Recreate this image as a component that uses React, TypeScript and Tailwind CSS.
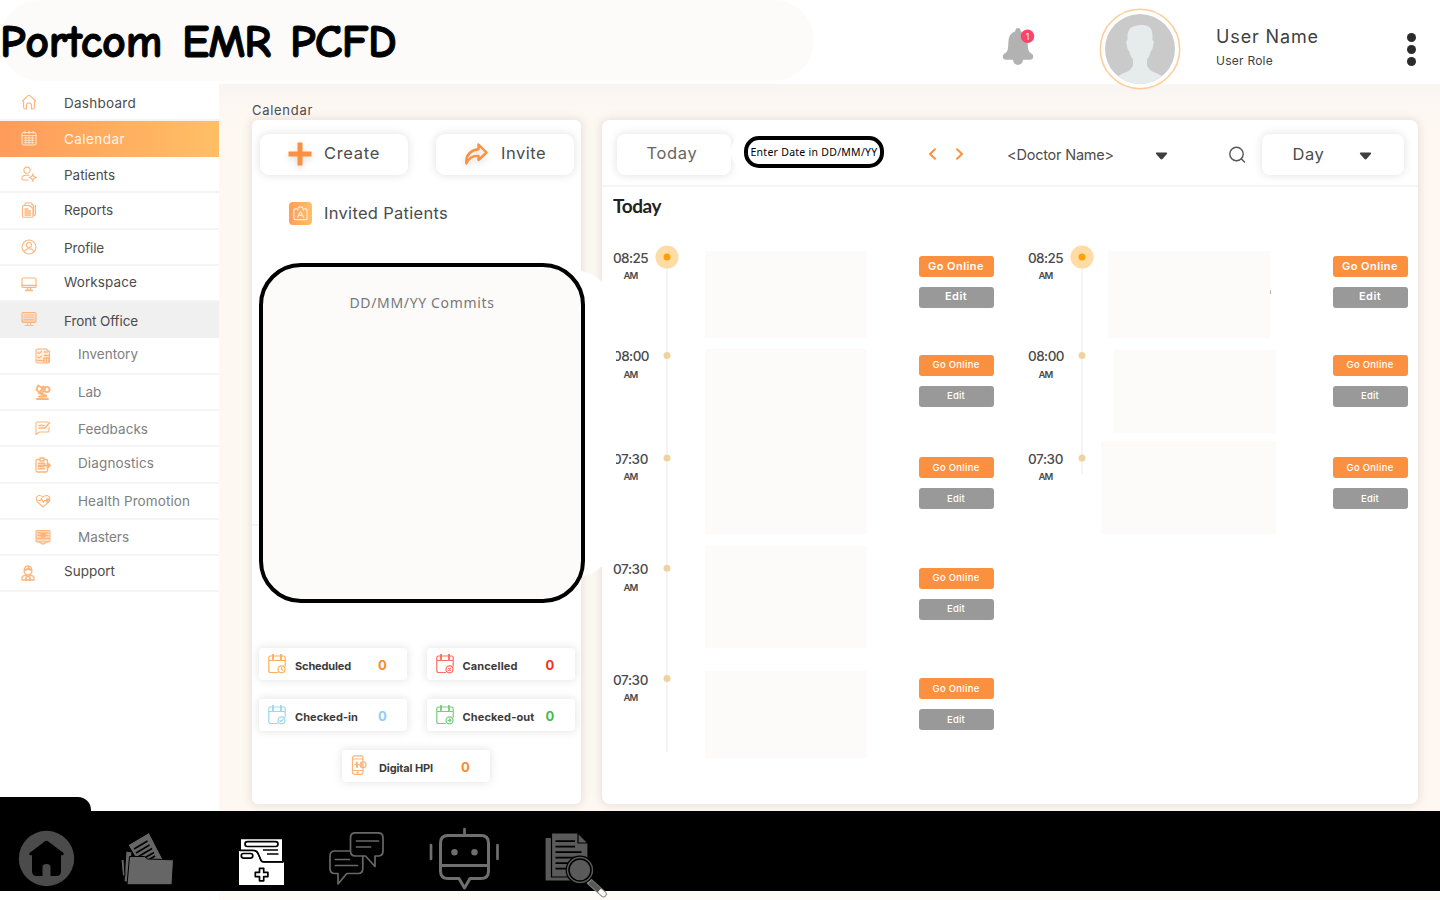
import React, { useLayoutEffect, useRef, useState } from "react";

const sans = "font-['Inter',sans-serif]";
const noto = "font-['Noto_Sans',sans-serif]";

/** Single-line label whose tracking is adjusted so that it spans `w` pixels. */
function Fit({ w, children, className = "" }: { w: number; children: string; className?: string }) {
  const ref = useRef<HTMLSpanElement>(null);
  const [ls, setLs] = useState(0);
  useLayoutEffect(() => {
    if (!ref.current) return;
    const natural = ref.current.getBoundingClientRect().width;
    setLs((w - natural) / Math.max(1, children.length));
  }, [w, children]);
  return (
    <span ref={ref} className={`inline-block shrink-0 whitespace-pre ${className}`} style={{ letterSpacing: ls }}>
      {children}
    </span>
  );
}

function Ico({ children, className = "size-4" }: { children: React.ReactNode; className?: string }) {
  return (
    <svg viewBox="0 0 16 16" fill="none" stroke="currentColor" strokeWidth="1.1" strokeLinecap="round" strokeLinejoin="round" className={`shrink-0 ${className}`}>
      {children}
    </svg>
  );
}

const icons: Record<string, React.ReactNode> = {
  home: <path d="M1.5 7 6.8 1.8Q8 .8 9.2 1.8L14.5 7 13.4 7.8V13.5Q13.4 15 11.8 15H10.6V11.5Q10.6 9 8 9T5.4 11.5V15H4.2Q2.6 15 2.6 13.5V7.8Z" />,
  calendar: (
    <>
      <rect x="1" y="2.5" width="14" height="12.5" rx="1.8" />
      <path d="M4 1v2.5M8 1v2.5M12 1v2.5M1 5.5h14M3 8h10M3 10.3h10M3 12.6h10M4.7 6.5v7.5M8 6.5v7.5M11.3 6.5v7.5" strokeWidth=".9" />
    </>
  ),
  patients: (
    <>
      <circle cx="6" cy="4.2" r="3.1" />
      <path d="M7 14H2.2Q.8 14 .8 12.5 1.2 9.3 4.5 9.3H8M11.8 8 12.8 10.6 15.4 11.6 12.8 12.6 11.8 15.2 10.8 12.6 8.2 11.6 10.8 10.6Z" />
    </>
  ),
  reports: (
    <>
      <path d="M4 3.5V2Q4 1 5 1H10L12.5 3.5M14.5 3V12Q14.5 13 13.5 13.4M1.5 4.5Q1.5 3.5 2.5 3.5H8.5L12 6.5V14.2Q12 15.2 11 15.2H2.5Q1.5 15.2 1.5 14.2Z" />
      <path d="M4 7h3M4 9h5.5M4 11h5.5M4 13h5.5M12.5 4v9" strokeWidth="1.4" />
    </>
  ),
  profile: (
    <>
      <circle cx="8" cy="8" r="7" />
      <circle cx="8" cy="6" r="2.5" />
      <path d="M3.5 13Q3.8 9.7 8 9.7T12.5 13" />
    </>
  ),
  workspace: (
    <>
      <rect x="1" y="2" width="14" height="9.5" rx="1" />
      <path d="M1 9.5h14M6.5 12v2M9.5 12v2M4.5 14.5h7" strokeWidth="1.4" />
    </>
  ),
  front: (
    <>
      <rect x="1" y="1.5" width="14" height="10" rx="1.2" fill="currentColor" fillOpacity=".25" />
      <path d="M3 4h10M3 6.2h10M3 8.4h10M1 10h14M6.5 12v2M9.5 12v2M4 14.5h8" strokeWidth=".9" />
    </>
  ),
  inventory: (
    <>
      <path d="M1 2.5Q1 1 2.5 1H11L14.5 3.5V13.5Q14.5 15 13 15H2.5Q1 15 1 13.5ZM2.8 4.5 4 5.7 6.5 3.5M2.8 9 4 10.2 6.5 8" fill="currentColor" fillOpacity=".2" />
      <path d="M2.5 12.5h5M9.5 4h3M9 14V10h5v4M9.5 7.5h4M11.5 10v4" strokeWidth="1.6" />
    </>
  ),
  lab: (
    <>
      <path d="M3 1.5 7.5 4 5 8.5 1.5 6ZM8 2.5 10 4 7.5 8.5M4 9 11 11.5M2 15h11M4 12.5h7" strokeWidth="2" />
      <circle cx="12" cy="5.5" r="2.6" strokeWidth="1.9" />
    </>
  ),
  feedback: (
    <>
      <path d="M12.5 2H2Q1 2 1 3V14.5L4.5 12H13Q14 12 14 11V7" />
      <path d="M4 5.5h5M4 8h6M9.8 8.2 14.5 2.5" strokeWidth="1.5" />
    </>
  ),
  diagnostics: (
    <>
      <path d="M5 2.5H2.5Q1 2.5 1 4V13.5Q1 15 2.5 15H11Q12.5 15 12.5 13.5V11M5 1h4v3H5ZM9 2.5h2Q12.5 2.5 12.5 4V6" strokeWidth="1.3" />
      <path d="M3.5 6.5h6M3.5 9h5M3.5 11.5h6M9.5 8.5h5.5M12.5 6.3 15 8.5 12.5 10.7" strokeWidth="1.9" />
    </>
  ),
  health: (
    <>
      <path d="M8 14 2.3 8.6Q.3 6 1.8 3.8 4.5 1.2 8 4 11.5 1.2 14.2 3.8 15.7 6 13.7 8.6Z" />
      <path d="M3 7.5h2.5L6.5 5.5 8.3 9.5 9.5 7.5h1" />
      <circle cx="12.8" cy="7.5" r="1.8" fill="currentColor" />
    </>
  ),
  masters: (
    <>
      <rect x="1" y="1.5" width="14" height="11.5" rx="1" fill="currentColor" fillOpacity=".45" />
      <path d="M3 4h3M10 4h3M3 6.5h2M11 6.5h2M4 13 8 15.3 12 13M2 9.5h12" strokeWidth="1.3" />
      <circle cx="8" cy="6" r="2.3" fill="currentColor" />
    </>
  ),
  support: (
    <>
      <path d="M4.2 6.5Q4 1 8 1T11.8 6.5Q11.8 9 8 10.2 4.2 9 4.2 6.5ZM2 15V12.5Q2.5 10.7 5.5 10.4L8 12 10.5 10.4Q13.5 10.7 14 12.5V15Z" strokeWidth="1.3" />
      <path d="M4.7 5Q8 4.5 8.5 3 9.5 5 11.3 5M6 13v2M10 13v2" strokeWidth="1.9" />
    </>
  ),
};

type Nav = { icon: string; label: string; w: number; sub?: boolean; active?: boolean; open?: boolean; text: string; ic: string };
const nav: Nav[] = [
  { icon: "home", label: "Dashboard", w: 72, text: "pt-[3px]", ic: "pt-px" },
  { icon: "calendar", label: "Calendar", w: 61, active: true, text: "pt-[3px]", ic: "pt-px" },
  { icon: "patients", label: "Patients", w: 51, text: "pt-[2px]", ic: "pt-0" },
  { icon: "reports", label: "Reports", w: 49, text: "pt-0", ic: "pt-0" },
  { icon: "profile", label: "Profile", w: 40, text: "pt-[2px]", ic: "pt-px" },
  { icon: "workspace", label: "Workspace", w: 73, text: "pb-[3px]", ic: "pt-[1px]" },
  { icon: "front", label: "Front Office", w: 74, open: true, text: "pt-[3px]", ic: "pt-0" },
  { icon: "inventory", label: "Inventory", w: 60, sub: true, text: "pb-[3px]", ic: "pt-0" },
  { icon: "lab", label: "Lab", w: 23, sub: true, text: "pt-0", ic: "pt-0" },
  { icon: "feedback", label: "Feedbacks", w: 70, sub: true, text: "pt-px", ic: "pb-[1px]" },
  { icon: "diagnostics", label: "Diagnostics", w: 76, sub: true, text: "pb-[3px]", ic: "pt-px" },
  { icon: "health", label: "Health Promotion", w: 112, sub: true, text: "pt-px", ic: "pt-0" },
  { icon: "masters", label: "Masters", w: 51, sub: true, text: "pt-0", ic: "pt-0" },
  { icon: "support", label: "Support", w: 51, text: "pb-[5px]", ic: "pt-0" },
];

function Sidebar() {
  return (
    <nav className="w-[219px] shrink-0 bg-white pt-[0.500px]">
      {nav.map((n) => (
        <div
          key={n.label}
          className={`flex h-[36.290px] items-center border-b-2 ${
            n.active ? "border-transparent bg-linear-to-r from-[#ff9b5b] to-[#ffbf65] bg-origin-border" : n.open ? "border-[#f0f0f0] bg-[#f0f0f0]" : "border-[#f4f4f4]"
          } ${n.sub ? "pl-[35px]" : n.icon === "support" ? "pl-[20px]" : "pl-[21px]"}`}
        >
          <div className={`flex w-4 ${n.ic} ${n.active ? "text-[#ffe5cb]" : "text-[#ffb47a]"}`}>
            <Ico>{icons[n.icon]}</Ico>
          </div>
          <div className={`${n.icon === "support" ? "ml-[28px]" : "ml-[27px]"} ${n.sub ? "text-[#808080]" : n.active ? "text-[#fff5ea]" : "text-[#4c4c4c]"} ${n.text} flex text-[13.500px] leading-[16px]`}>
            <Fit w={n.w}>{n.label}</Fit>
          </div>
        </div>
      ))}
    </nav>
  );
}

function Header() {
  return (
    <header className="relative z-10 flex h-[84px] shrink-0 items-start bg-white">
      <div className="flex h-[81px] w-[814px] shrink-0 items-center gap-[20px] rounded-[40px] bg-[#fcfbf9] pt-[5px] font-['Comic_Sans_MS','Comic_Neue','Lato',sans-serif] text-[46px] leading-none font-black text-black [-webkit-text-stroke:1px_black]">
        <Fit w={162}>Portcom</Fit>
        <Fit w={88}>EMR</Fit>
        <Fit w={106}>PCFD</Fit>
      </div>
      <svg viewBox="1002 27 34 40" className="mt-[27px] ml-[188px] h-10 w-[34px] shrink-0">
        <path d="M1018 28q2.600 0 2.700 3.200 6.500 2 6.900 10.300l.4 7.500q.3 2.500 4 5 1.600 1.200 1.200 3.200-.5 2.500-3 2.500h-7q-1.200 5.200-5.200 5.200t-5.200-5.200h-7q-2.500 0-3-2.500-.4-2 1.200-3.200 3.700-2.500 4-5l.4-7.500q.4-8.300 6.900-10.300.1-3.200 2.700-3.200Z" fill="#b2b2b2" />
        <circle cx="1027.500" cy="36.300" r="6.700" fill="#ff426b" />
        <text x="1027.500" y="39.500" textAnchor="middle" fontSize="8.500" fill="#fff" fontFamily="Inter, sans-serif">1</text>
      </svg>
      <svg viewBox="1099 8 82 82" className="mt-[8px] ml-[63px] size-[82px] shrink-0">
        <defs>
          <clipPath id="face"><circle cx="1140" cy="49" r="35" /></clipPath>
        </defs>
        <circle cx="1140" cy="49" r="39.700" fill="#fff" stroke="#fdcd98" strokeWidth="1.500" />
        <circle cx="1140" cy="49" r="35" fill="#cacaca" />
        <path clipPath="url(#face)" fill="#e6ecec" d="M1140 25q12-1 12.500 9v6q2 1 .8 5-.8 5-2.600 6.500-1 5-3.700 8v5.500q1 5 9 8l8 4V90H1116V77l8-4q8-3 9-8v-5.500q-2.700-3-3.700-8-1.800-1.500-2.600-6.500-1.200-4 .8-5v-6q.5-8 12.500-9Z" />
      </svg>
      <div className="mt-[26px] ml-[35px] flex w-[191px] shrink-0 flex-col items-start text-[#3f3f3f]">
        <Fit w={103} className="text-[18px] leading-[22px]">User Name</Fit>
        <Fit w={57} className="mt-[5px] text-[12px] leading-[15px]">User Role</Fit>
      </div>
      <div className="mt-[32.500px] flex flex-col gap-[3px]">
        <i className="size-[9px] rounded-full bg-[#2b2b2b]" />
        <i className="size-[9px] rounded-full bg-[#2b2b2b]" />
        <i className="size-[9px] rounded-full bg-[#2b2b2b]" />
      </div>
    </header>
  );
}

const soft = "bg-white shadow-[0_0_8px_1px_rgba(0,0,0,0.1)]";

function Stat({ label, lw, value, color, num, mark, gap, phone }: { label: string; lw: number; value: string; color: string; num: string; mark?: string; gap: string; phone?: boolean }) {
  return (
    <div className={`flex h-8 w-[148px] items-center rounded-[4px] pl-[9px] ${soft}`}>
      <svg viewBox="0 0 18 20" fill="none" stroke="currentColor" strokeWidth="1.2" strokeLinecap="round" strokeLinejoin="round" className={`h-5 w-[18px] shrink-0 ${color} ${phone ? "mb-[3px]" : "mb-[1px]"}`}>
        {phone ? (
          <>
            <rect x="1.500" y=".8" width="10.500" height="18.500" rx="2" />
            <path d="M1.500 4h10.500M1.500 15.500h10.500M4 9.700h4" />
            <path d="M6 7.500v4.500M10.500 8v3.500" strokeWidth="2" />
            <circle cx="12" cy="9.700" r="3" />
            <circle cx="6.700" cy="17.500" r=".6" />
          </>
        ) : (
          <>
            <path d="M9.500 18.500H2.500Q.8 18.500.8 16.500V3.500Q.8 2 2.500 2H15.500Q17.200 2 17.200 3.500V12M.8 6.500H17.200" />
            <path d="M5 .8v4.500M13 .8v4.500" strokeWidth="1.900" />
            <circle cx="13.500" cy="15.300" r="3.500" />
            <path d={mark} />
          </>
        )}
      </svg>
      <div className={`flex pt-[3px] text-[11px] leading-[14px] font-bold text-[#3c3c3c] ${phone ? "ml-[10.500px]" : "ml-[9px]"}`}>
        <Fit w={lw}>{label}</Fit>
      </div>
      <span className={`pt-[1px] text-[13px] leading-4 font-bold ${num} ${gap}`}>{value}</span>
    </div>
  );
}

function LeftCard() {
  return (
    <section className="flex h-[684px] w-[329px] shrink-0 flex-col rounded-[6px] bg-white shadow-[0_0_9px_2px_rgba(110,80,60,0.13)]">
      <div className="mt-[13.500px] ml-[8px] flex gap-[28px] text-[16.500px] text-[#4c4c4c]">
        <div className={`flex h-[41px] w-[148px] items-center rounded-[9px] pb-px pl-[28px] ${soft}`}>
          <svg viewBox="0 0 24 24" className="size-6 shrink-0 drop-shadow-md"><path d="M9.500.5h5v9h9v5h-9v9h-5v-9h-9v-5h9Z" fill="#fb9140" /></svg>
          <div className="ml-[12px] flex"><Fit w={56}>Create</Fit></div>
        </div>
        <div className={`flex h-[41px] w-[138px] items-center rounded-[9px] pb-px pl-[28px] ${soft}`}>
          <svg viewBox="0 0 24 24" className="size-6 shrink-0 drop-shadow-md" fill="none" stroke="#fb9140" strokeWidth="2.400" strokeLinejoin="round"><path d="M14.500 2.500 22.500 10.500 14.500 18V14Q6.500 13 2.300 21.500 1.500 9 14.500 7.200Z" /></svg>
          <div className="ml-[13px] flex"><Fit w={45}>Invite</Fit></div>
        </div>
      </div>
      <div className="mt-[27.500px] ml-[36.500px] flex h-[23px] items-center">
        <div className="flex size-[23px] items-center justify-center rounded-[4px] bg-linear-to-r from-[#ff9d5c] to-[#ffbf65] text-[#ffe9d3]">
          <Ico className="size-[15px]">
            <path d="M5 3H2.500Q1 3 1 4.500V13Q1 14.500 2.500 14.500H13.500Q15 14.500 15 13V4.500Q15 3 13.500 3H11M5 4.500Q5 1 8 1T11 4.500M5 12 7 7.500Q8 5 9 7.500L11 12M6.500 10h3" strokeWidth="1.300" />
          </Ico>
        </div>
        <div className="ml-[12.500px] flex text-[16.500px] text-[#4c4c4c]"><Fit w={124}>Invited Patients</Fit></div>
      </div>
      <div className="mt-[299px] h-[2px] bg-[#f4f4f4]" />
      <div className="mt-[122px] ml-[7px] grid grid-cols-[148px_148px] gap-x-[19.500px] gap-y-[19px]">
        <Stat label="Scheduled" lw={56} value="0" color="text-[#ffae58]" num="text-[#f78a2c]" gap="ml-[27px]" mark="M13.500 13.500v2l1.300.7" />
        <Stat label="Cancelled" lw={55} value="0" color="text-[#fb6e62]" num="text-[#f7301e]" gap="ml-[28px]" mark="M12.500 14.300l2 2M14.500 14.300l-2 2" />
        <Stat label="Checked-in" lw={63} value="0" color="text-[#9bd7f4]" num="text-[#8fcdf8]" gap="ml-[20px]" mark="M12 15.300l1.200 1.200 2-2.300" />
        <Stat label="Checked-out" lw={72} value="0" color="text-[#76cf79]" num="text-[#46bb50]" gap="ml-[11px]" mark="M12 15.300h3M13.700 14l1.300 1.300-1.300 1.300" />
      </div>
      <div className="mt-[19px] ml-[89.500px] flex">
        <Stat label="Digital HPI" lw={54} value="0" color="text-[#ffb47a]" num="text-[#f78a2c]" gap="ml-[28px]" phone />
      </div>
    </section>
  );
}

function Caret({ className = "" }: { className?: string }) {
  return <svg viewBox="0 0 13 8" className={`h-2 w-[13px] shrink-0 ${className}`}><path d="M1.500.5h10q1.200.4.4 1.500L7.500 7q-1 .8-2 0L1.100 2Q.3.900 1.500.5Z" fill="#3f3f3f" /></svg>;
}

function Times({ items }: { items: { t: string; w: number; h: string }[] }) {
  return (
    <div className="flex w-[36px] flex-col text-[#4a4a4a]">
      {items.map((x, i) => (
        <div key={i} className={`flex flex-col ${x.h}`}>
          <Fit w={x.w} className="self-start text-[13.500px] leading-[16px] font-medium">{x.t}</Fit>
          <Fit w={14} className="mt-[4.500px] ml-[10.500px] self-start text-[9.500px] leading-[12px] font-semibold">AM</Fit>
        </div>
      ))}
    </div>
  );
}

function Line({ dots, view, className }: { dots: number[]; view: string; className: string }) {
  const last = dots[dots.length - 1];
  return (
    <svg viewBox={view} className={`shrink-0 ${className}`}>
      <path d={`M12 20V${last > 400 ? 507 : 229}`} stroke="#f3f3f3" strokeWidth="1.800" />
      <circle cx="12" cy="12" r="11.600" fill="#ffdca6" />
      <circle cx="12" cy="12" r="3.500" fill="#ffa200" />
      {dots.map((d) => <circle key={d} cx="12" cy={d} r="3.500" fill="#f0d2a0" />)}
    </svg>
  );
}

function Buttons({ rows }: { rows: string[] }) {
  return (
    <div className="flex w-[75px] flex-col pt-[11px] text-white">
      {rows.map((h, i) => (
        <div key={i} className={`flex shrink-0 flex-col gap-[10px] ${h}`}>
          <div className="flex h-[21px] items-center justify-center rounded-[3px] bg-[#fb9140]">
            {i === 0 ? <Fit w={56} className="text-[11px] leading-[14px] font-semibold">Go Online</Fit> : <Fit w={47} className="text-[9.500px] leading-[12px] font-medium">Go Online</Fit>}
          </div>
          <div className="flex h-[21px] items-center justify-center rounded-[3px] bg-[#999]">
            {i === 0 ? <Fit w={22} className="mb-[2px] text-[11px] leading-[14px] font-semibold">Edit</Fit> : <Fit w={18} className="text-[9.500px] leading-[12px] font-medium">Edit</Fit>}
          </div>
        </div>
      ))}
    </div>
  );
}

function RightCard() {
  return (
    <section className="flex h-[684px] w-[816px] shrink-0 flex-col rounded-[8px] bg-white shadow-[0_0_9px_2px_rgba(110,80,60,0.13)]">
      <div className="flex h-[67px] items-start border-b-2 border-[#f5f5f5] pt-[13.500px] pl-[15px]">
        <div className={`flex h-[41px] w-[114px] items-center justify-center rounded-[8px] pr-[4px] pb-px text-[16.500px] text-[#666] ${soft}`}>
          <Fit w={51}>Today</Fit>
        </div>
        <div className="relative mt-[-1.500px] flex h-[40px] w-[153px] items-center rounded-full bg-white pb-px pl-[13px]">
          <div className={`flex h-[32px] w-[140px] items-center justify-center rounded-[15px] border-4 border-black bg-white pt-[2px] text-[10.500px] leading-none text-black ${noto}`}>
            <Fit w={127}>Enter Date in DD/MM/YY</Fit>
          </div>
        </div>
        <svg viewBox="0 0 36 12" fill="none" stroke="#fb9140" strokeWidth="2" strokeLinecap="round" strokeLinejoin="round" className="mt-[14.500px] ml-[43.500px] h-3 w-9">
          <path d="M7 1.200 2 6l5 4.800M29 1.200 34 6l-5 4.800" />
        </svg>
        <div className="mt-[12px] ml-[43.500px] flex text-[14.500px] leading-[18px] text-[#4c4c4c]"><Fit w={107}>{"<Doctor Name>"}</Fit></div>
        <Caret className="mt-[18px] ml-[40.500px]" />
        <svg viewBox="0 0 18 18" fill="none" stroke="#555" strokeWidth="1.400" strokeLinecap="round" className="mt-[12px] ml-[60px] size-[18px] shrink-0">
          <circle cx="8.500" cy="8" r="6.700" />
          <path d="M13.500 13l3 3" />
        </svg>
        <div className={`ml-[16px] flex h-[41px] w-[142px] items-center rounded-[8px] pl-[31px] text-[16.500px] text-[#4c4c4c] ${soft}`}>
          <Fit w={32}>Day</Fit>
          <Caret className="mt-[3px] ml-[34px]" />
        </div>
      </div>
      <div className="mt-[8px] ml-[11px] flex h-[22px] items-center font-['Lato',sans-serif] text-[19px] font-bold text-[#222]">
        <Fit w={48}>Today</Fit>
      </div>
      <div className="mt-[27.500px] ml-[11px] flex items-start">
        <div className="mt-[5px]"><Times items={[{ t: "08:25", w: 35, h: "h-[98.500px]" }, { t: "08:00", w: 36, h: "h-[102.500px]" }, { t: "07:30", w: 35, h: "h-[110.500px]" }, { t: "07:30", w: 35, h: "h-[110.500px]" }, { t: "07:30", w: 35, h: "h-[32px]" }]} /></div>
        <Line dots={[110.5, 213, 323.3, 433.6]} view="0 0 24 508" className="ml-[6px] h-[508px] w-6" />
        <div className="mt-[6.500px] ml-[26px] flex w-[162px] flex-col">
          <div className="h-[87px] bg-[#fcfbf9]" />
          <div className="mt-[11px] h-[185px] bg-[#fcfbf9]" />
          <div className="mt-[12px] h-[102px] bg-[#fcfbf9]" />
          <div className="mt-[23px] h-[87px] bg-[#fcfbf9]" />
        </div>
        <div className="ml-[51.500px]"><Buttons rows={["h-[99px]", "h-[102.500px]", "h-[110.500px]", "h-[110.500px]", "h-[52px]"]} /></div>
        <div className="mt-[5px] ml-[34.500px]"><Times items={[{ t: "08:25", w: 35, h: "h-[98.500px]" }, { t: "08:00", w: 36, h: "h-[102.500px]" }, { t: "07:30", w: 35, h: "h-[32px]" }]} /></div>
        <Line dots={[110.5, 213]} view="0 0 24 230" className="ml-[6px] h-[230px] w-6" />
        <div className="mt-[6.500px] ml-[7px] flex w-[175px] flex-col">
          <div className="ml-[6.500px] flex w-[164px] items-center">
            <div className="h-[87px] w-[162px] bg-[#fcfbf9]" />
            <div className="mb-[6px] h-[4px] w-px rounded-full bg-[#aaa]" />
          </div>
          <div className="mt-[12px] ml-[13px] h-[83px] w-[162px] bg-[#fcfbf9]" />
          <div className="mt-[8px] h-[93px] bg-[#fcfbf9]" />
        </div>
        <div className="ml-[56.500px]"><Buttons rows={["h-[99px]", "h-[102.500px]", "h-[52px]"]} /></div>
      </div>
    </section>
  );
}

function Footer() {
  return (
    <footer className="relative flex h-[79.500px] shrink-0 items-start bg-black pl-[18px]">
      <div className="absolute top-[-14px] left-0 h-[16px] w-[91px] rounded-tr-[13px] bg-black" />
      <svg viewBox="18 830 57 57" className="relative mt-[19px] size-[57px]">
        <circle cx="46.500" cy="858.500" r="27.700" fill="#4b4b4b" />
        <path d="M44.700 841.500q1.800-1.300 3.600 0L63.500 853q1 1.800-.8 2.300H61V871q0 5-4.500 5H50.500V867q0-3-4-3t-4 3V876H36.500Q32 876 32 871V855.300H30.300q-1.800-.5-.8-2.300Z" />
      </svg>
      <svg viewBox="120 831 55 56" className="mt-[20px] ml-[45px] h-14 w-[55px]" fill="#666" stroke="#000" strokeWidth="1">
        <path d="M126 851l6 1-3 30.500-5-.8Z" />
        <path d="M121 860l3-1 1 17-2.500 0ZM128 845l21-12.500 15 29-23 5Z" />
        <path d="M134 849l13.500-8M136 853l13.500-8M138.500 856.500l13.500-8M140 860.500l14-8M143 863l12-7" strokeWidth="1.500" />
        <path d="M129.500 856.500h15l3 2.500 26 .8-1.500 25H127Z" />
      </svg>
      <svg viewBox="237 837 50 50" className="mt-[26px] ml-[62px] size-[50px]" fill="#fff">
        <path d="M241 839.300h41V861H262l-5-10h-16Z" />
        <path d="M239 851h14q3.500 0 5 4l2.500 6q.7 1.500 3 1.500H284V885H239Z" />
        <path d="M239.500 850.300H253q4 0 5.500 4l2.500 6q.7 1.500 3 1.500h19" fill="none" stroke="#000" strokeWidth="1.700" />
        <g fill="none" stroke="#000" strokeWidth="1.700" strokeLinejoin="round">
          <rect x="245" y="841.700" width="33" height="4.800" rx="2.400" />
          <rect x="241.300" y="853.500" width="11.500" height="4.600" rx="2.300" />
          <path d="M263 850h15M267 854h11.500M259.500 868.300h4.200v4.100h4.200v4.200h-4.200v4.200h-4.200v-4.200h-4.200v-4.200h4.200Z" />
        </g>
      </svg>
      <svg viewBox="328 830 58 56" className="mt-[19px] ml-[41px] h-14 w-[58px]" fill="none" stroke="#686868" strokeWidth="1.700" strokeLinejoin="round" strokeLinecap="round">
        <path d="M355.500 832.800H378q5 0 5 5V851q0 5-5 5h-3v10.500L365.500 856H355.500q-5 0-5-5V837.800q0-5 5-5ZM356.500 841h22M356.500 847h14" />
        <path d="M350 851H335q-5 0-5 5v12.500q0 5 5 5h3v10.500l8.800-10.500H358q4.800 0 4.800-5V856.500M335.500 859.500h14M335.500 865.500h22" />
      </svg>
      <svg viewBox="428 826 72 65" className="mt-[15px] ml-[42px] h-[65px] w-[72px]" fill="none" stroke="#6f6f6f" strokeWidth="3" strokeLinecap="round" strokeLinejoin="round">
        <path d="M464.500 829v5M431 845v14M497.500 845v14" strokeWidth="2.700" />
        <path d="M448 835.500h33q7.500 0 7.500 7.500v28q0 7.500-7.500 7.500h-11l-5.500 9.500-5.500-9.500H448q-7.500 0-7.500-7.500V843q0-7.500 7.500-7.500ZM441 865.500h47" />
        <circle cx="454.500" cy="852.300" r="3.200" fill="#6f6f6f" stroke="none" />
        <circle cx="474.500" cy="852.300" r="3.200" fill="#6f6f6f" stroke="none" />
      </svg>
      <svg viewBox="543 830 66 68" className="relative z-10 mt-[19px] ml-[43px] h-[68px] w-[66px]" fill="#5a5a5a" stroke="#000" strokeWidth="1.200">
        <path d="M545 837.500h34V881H545Z" />
        <path d="M551.500 833H578l10 10v34h-36.500Z" />
        <path d="M578 833v10h10Z" />
        <path d="M555.500 841.200h19.500M555.500 846.700h19.500M555.500 852.200h26M555.500 857.700h21M555.500 863.200h13M555.500 868.700h12" strokeWidth="1.800" />
        <path d="M590 882 603.500 894" stroke="#8a8a8a" strokeWidth="6.500" strokeLinecap="round" />
        <path d="M600.500 891.500 603.500 894" stroke="#fefaf6" strokeWidth="4.500" strokeLinecap="round" />
        <path d="M590 882 599.500 890.200" stroke="#5a5a5a" strokeWidth="5" />
        <circle cx="580" cy="870" r="13.800" />
        <circle cx="580" cy="870" r="11" strokeWidth="1.500" />
      </svg>
    </footer>
  );
}

export default function App() {
  return (
    <div className={`relative flex h-[900px] w-[1440px] flex-col overflow-hidden bg-white ${sans}`}>
      <Header />
      <div className="flex h-[727px] shrink-0">
        <Sidebar />
        <main className="relative w-[1221px] bg-[#fef8f3] bg-linear-to-b from-[#f8f5f2] to-[#fef8f3] to-[28px] pt-[16px] pl-[33px]">
          <div className="flex h-[20px] items-center pt-px text-[13px] leading-none text-[#4c4c4c]"><Fit w={61}>Calendar</Fit></div>
          <div className="flex gap-[21px]">
            <LeftCard />
            <RightCard />
          </div>
          <div className="absolute top-[186px] left-[61px] h-[308px] w-[336px] rounded-[44px] bg-white" />
          <div className={`absolute top-[179px] left-[40px] flex h-[340px] w-[326px] justify-center rounded-[42px] border-4 border-black bg-[#fcfbfa] pt-[26px] text-[14px] leading-[20px] text-[#777] ${noto}`}>
            <Fit w={145}>DD/MM/YY Commits</Fit>
          </div>
        </main>
      </div>
      <Footer />
      <div className="flex flex-1">
        <div className="w-[219px] bg-white" />
        <div className="flex-1 bg-[#fefaf6]" />
      </div>
    </div>
  );
}
